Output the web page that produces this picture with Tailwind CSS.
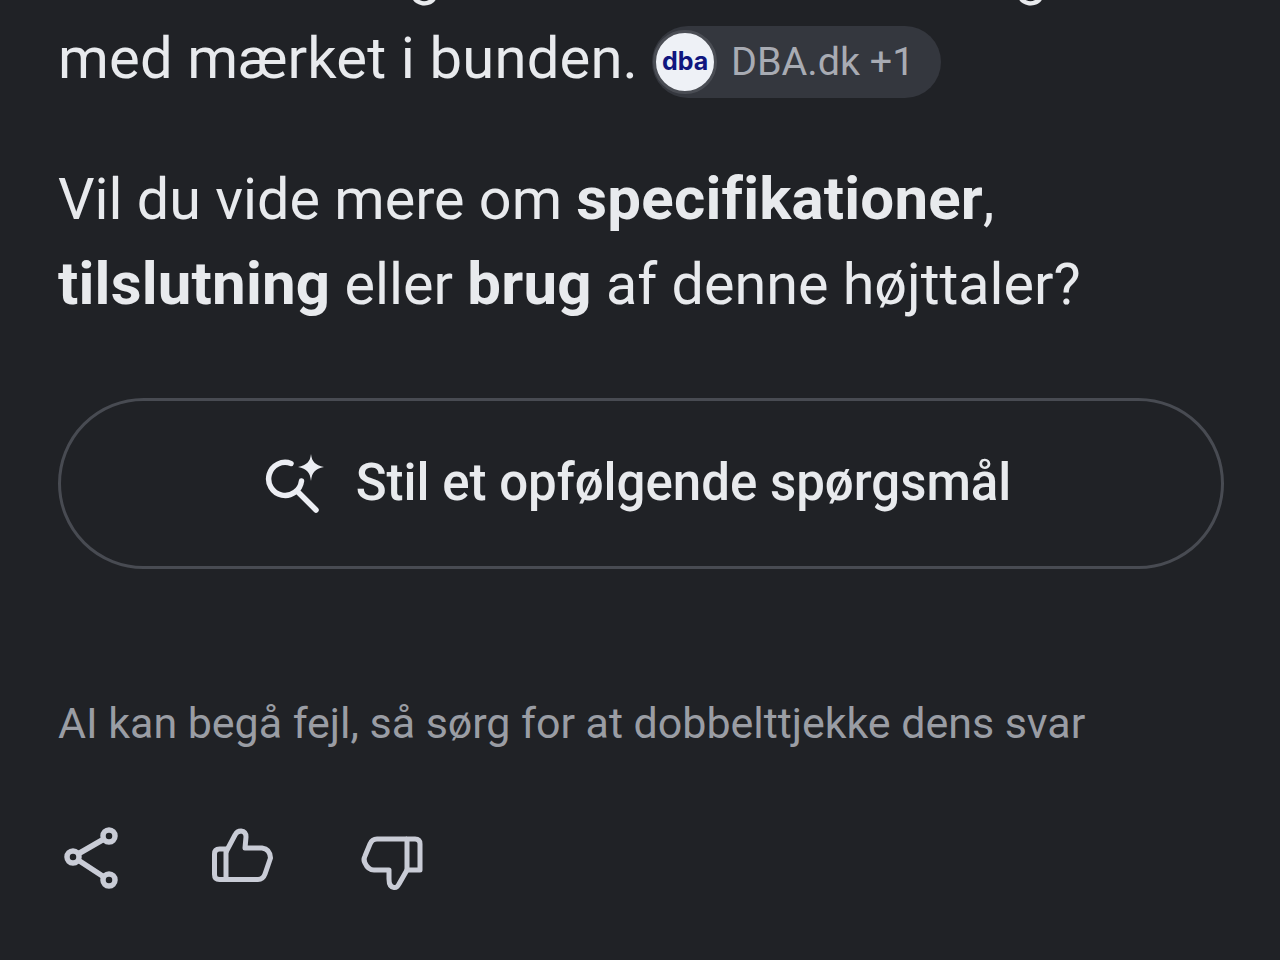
<!DOCTYPE html>
<html lang="en">
<head>
    <meta charset="UTF-8">
    <title>Svar</title>
    <script src="https://cdn.jsdelivr.net/npm/@tailwindcss/browser@4"></script>
</head>
<body class="bg-[#202226] overflow-hidden">
    <main class="w-[1280px] h-[960px] overflow-hidden px-[58px] font-['Roboto',sans-serif] text-[#e8eaed]">
        <!-- Answer text -->
        <div class="-mt-[69px] text-[57.500px] leading-[85px]">
            <p class="h-[85px] whitespace-nowrap"><span class="ml-[351px]">g</span><span class="ml-[574px]">g</span></p>
            <p class="flex items-center h-[85px] whitespace-nowrap">
                <span class="text-[58px] tracking-[0.15px]">med mærket i bunden.</span>
                <span class="ml-[14px] flex items-center h-[72px] w-[289px] rounded-full bg-[#34373e] mt-[6px]">
                    <span class="flex items-center justify-center w-[64px] h-[64px] ml-[1px] rounded-full bg-[#eef1f6] border-[3px] border-[#4a4d54] text-[#10167f] font-['Inter',sans-serif] text-[25px] font-bold leading-none">dba</span>
                    <span class="ml-[14px] text-[39.500px] leading-none text-[#a8abb3]">DBA.dk +1</span>
                </span>
            </p>
            <p class="mt-[56px] whitespace-nowrap">Vil du vide mere om <b class="text-[60px] leading-none tracking-[0.2px] font-bold">specifikationer</b>,</p>
            <p class="whitespace-nowrap"><b class="text-[60px] leading-none tracking-[0.2px] font-bold">tilslutning</b> eller <b class="text-[60px] leading-none tracking-[0.2px] font-bold">brug</b> af denne højttaler?</p>
        </div>

        <!-- Follow-up button -->
        <button class="mt-[71px] pr-[6px] flex items-center justify-center gap-[29px] w-[1166px] h-[171px] rounded-full border-[3px] border-[#484b52] text-[51px] font-medium">
            <svg class="w-[62px] h-[62px]" viewBox="0 0 62 62" fill="none">
                <path d="M26 10.500A16.500 16.500 0 1 0 36.500 28" stroke="#eceef3" stroke-width="5.500" stroke-linecap="round"/>
                <path d="M33 39 L51 57" stroke="#eceef3" stroke-width="5.500" stroke-linecap="round"/>
                <path d="M46 1 C47 9 50 12 59 14 C50 16 47 19 46 28 C45 19 42 16 33 14 C42 12 45 9 46 1Z" fill="#eceef3"/>
            </svg>
            <span>Stil et opfølgende spørgsmål</span>
        </button>

        <!-- Disclaimer -->
        <p class="mt-[124px] text-[43px] tracking-[-0.04px] leading-[60px] text-[#9a9da4] whitespace-nowrap">AI kan begå fejl, så sørg for at dobbelttjekke dens svar</p>

        <!-- Feedback actions -->
        <div class="mt-[74px] ml-[2px] flex items-center gap-[86px] text-[#c9ccd6]">
            <svg class="w-[64px] h-[64px]" viewBox="0 0 64 64" fill="none" stroke="currentColor" stroke-width="5.500">
                <circle cx="49" cy="9" r="6"/>
                <circle cx="13" cy="30" r="6"/>
                <circle cx="49" cy="53" r="6"/>
                <path d="M18 27 L44 12 M18 33 L44 50"/>
            </svg>
            <svg class="w-[64px] h-[64px]" viewBox="0 0 64 64" fill="none" stroke="currentColor" stroke-width="5" stroke-linejoin="round">
                <path d="M16 22 H9.500 Q4.500 22 4.500 27 V47.500 Q4.500 52.500 9.500 52.500 H16 Z"/>
                <path d="M16 25 L25 8 Q27 4 31 4 Q36 4.500 36 10 L35 21 H52 Q60 22 60.500 31 L55 47 Q53 52.500 48 52.500 H16"/>
            </svg>
            <svg class="w-[64px] h-[64px]" viewBox="0 0 64 64" fill="none" stroke="currentColor" stroke-width="5" stroke-linejoin="round">
                <path d="M60 43 H47 V12 H55 Q60 12 60 17 Z"/>
                <path d="M47 12 H17 Q12 12 10 17 L5 29 Q3 33 5 36 Q8 43 14 43 H29 V52 Q29 60 34 60.500 Q37 61 39 57 L47 43"/>
            </svg>
        </div>
    </main>
</body>
</html>
